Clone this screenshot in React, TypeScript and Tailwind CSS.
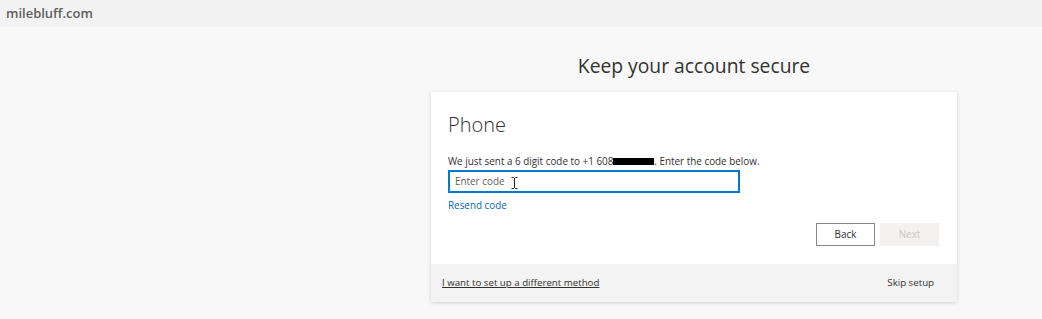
export default function App() {
  return (
    <div className="min-h-[319px] bg-[#f8f8f8] font-['Open_Sans',sans-serif] text-[#323130]">
      <div className="flex h-[27px] items-center bg-[#f2f2f2] px-[6px]">
        <span className="text-[13px] font-semibold text-[#605e5c]">milebluff.com</span>
      </div>
      <div className="ml-[431px] w-[526px] pt-[24px]">
        <h1 className="text-center text-[19.3px] leading-[30px] text-[#323130]">Keep your account secure</h1>
        <div className="mt-[11px] bg-white shadow-[0_1px_4px_rgba(0,0,0,0.16)]">
          <div className="pl-[17px] pr-[18px] pt-[18px] pb-[18px]">
            <h2 className="text-[20px] font-light leading-[30px] text-[#323130]">Phone</h2>
            <p className="mt-[14px] text-[9.9px] leading-[14px] text-[#323130]">
              We just sent a 6 digit code to +1 608
              <span className="inline-block h-[7px] w-[41px] translate-y-[-1px] bg-black align-middle" />
              . Enter the code below.
            </p>
            <div className="relative mt-[2px] flex h-[23px] w-[292px] items-center border-2 border-[#0078d4] px-[5px]">
              <span className="text-[9.9px] text-[#605e5c]">Enter code</span>
              <svg className="absolute left-[61px] top-[5px]" width="7" height="12" viewBox="0 0 7 12">
                <path d="M0.5 0.5h2l1 1 1-1h2M3.5 1.5v9M0.5 11.5h2l1-1 1 1h2" fill="none" stroke="#222" strokeWidth="1" />
              </svg>
            </div>
            <a className="mt-[5px] block text-[9.9px] leading-[14px] text-[#0067b8]">Resend code</a>
            <div className="mt-[11px] flex justify-end gap-[5px]">
              <button className="h-[23px] w-[59px] border border-[#8a8886] bg-white text-[9.9px] text-[#323130]">Back</button>
              <button className="h-[23px] w-[59px] bg-[#f3f2f1] text-[9.9px] text-[#c8c6c4]">Next</button>
            </div>
          </div>
          <div className="flex h-[38px] items-center justify-between bg-[#f3f3f3] pl-[11px] pr-[23px]">
            <a className="text-[9.7px] text-[#323130] underline">I want to set up a different method</a>
            <a className="text-[9.7px] text-[#323130]">Skip setup</a>
          </div>
        </div>
      </div>
    </div>
  );
}
